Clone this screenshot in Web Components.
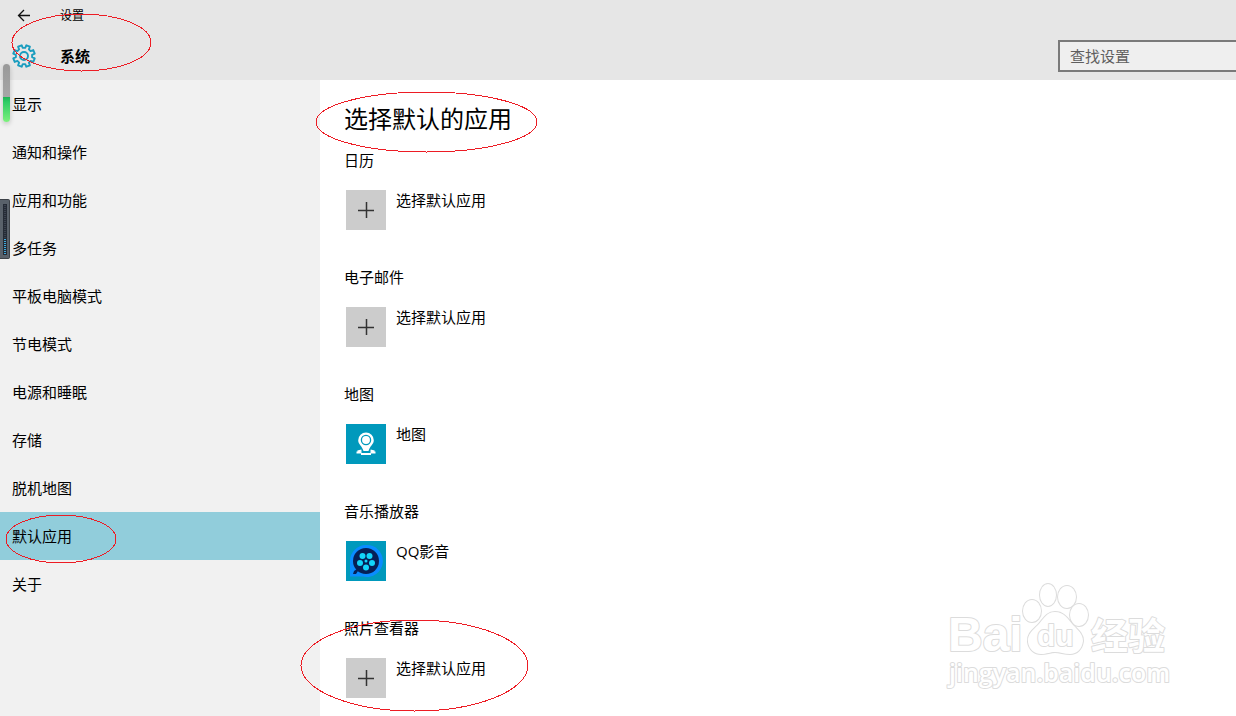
<!DOCTYPE html>
<html lang="zh-CN">
<head>
<meta charset="utf-8">
<title>设置</title>
<style>
    body {
        margin: 0;
        font: 15px/20px "Open Sans", "Noto Sans CJK SC", sans-serif;
        color: #000;
    }
</style>
</head>
<body>
<settings-app></settings-app>

<script>
class BaseHTMLElement extends HTMLElement {
    constructor() {
        super();
        this.attachShadow({ mode: 'open' });
    }

    render() {
        return '';
    }

    connectedCallback() {
        this.shadowRoot.innerHTML = `<style>${this.constructor.styles}</style>${this.render()}`;
    }
}

// Outline of an eight toothed gear around 12,12
function gearPath() {
    let points = [];
    for (let i = 0; i < 8; i++) {
        let middle = 22.5 + i * 45;
        for (let [offset, radius] of [[-14, 8.2], [-10, 11], [10, 11], [14, 8.2]]) {
            let angle = (middle + offset) * Math.PI / 180;
            points.push((12 + radius * Math.cos(angle)).toFixed(2) + ' ' + (12 + radius * Math.sin(angle)).toFixed(2));
        }
    }
    return `M${points.join('L')}Z`;
}

const ICONS = {
    add: `<path d="M12 20.5h16M20.5 12v16" stroke="#333" stroke-width="1.5" fill="none"/>`,
    map: `
        <path d="M20 8.500a7.800 7.800 0 0 0-7.800 7.800c0 4 3.800 5.500 5.300 10.700h5c1.500-5.200 5.300-6.700 5.300-10.700A7.800 7.800 0 0 0 20 8.500Z" fill="#fff"/>
        <circle cx="20" cy="16" r="4.600" fill="#fff" stroke="#0099bc" stroke-width="1.300"/>
        <path d="M15.500 26.500l-4 .8M24.500 26.500l4 .8M10.500 28.500h5M24.500 28.500h5M15 30h10" stroke="#fff" stroke-width="1.800" fill="none"/>`,
    player: `
        <path d="M20 4a16 16 0 1 1-3 31.500H4V20A16 16 0 0 1 20 4Z" fill="#0a8cff"/>
        <circle cx="20" cy="20" r="13" fill="#062056"/>
        <path d="M7 33l1-3 3-2 1 2-2 3Z" fill="#062056"/>
        <g fill="#12d5fa">
            <circle cx="16.500" cy="15" r="3"/><circle cx="23.500" cy="15" r="3"/>
            <circle cx="14" cy="22" r="3"/><circle cx="26" cy="22" r="3"/>
            <circle cx="20" cy="26.500" r="3"/><circle cx="20" cy="20" r="1.500"/>
        </g>`
};

class SettingsHeader extends BaseHTMLElement {
    static get styles() {
        return `
        :host {
            display: flex;
            justify-content: space-between;
            align-items: flex-end;
            height: 80px;
            background: #e6e6e6;
        }

        .row {
            display: flex;
            align-items: center;
            gap: 24px;
            height: 32px;
            padding-left: 12px;
            font-size: 12px;
        }

        .row.main {
            height: 48px;
        }

        button {
            display: flex;
            width: 24px;
            padding: 0;
            border: 0;
            background: none;
        }

        h1 {
            margin: 0;
            font-size: 15px;
            line-height: 20px;
        }

        input {
            box-sizing: border-box;
            width: 178px;
            height: 32px;
            margin-bottom: 8px;
            padding: 0 10px;
            border: 2px solid #7a7a7a;
            border-right: 0;
            border-radius: 0;
            background: #efefef;
            font: inherit;
            outline: none;
        }

        input::placeholder {
            color: #5f5f5f;
            opacity: 1;
        }
        `;
    }

    render() {
        return `
        <div>
            <div class="row">
                <button aria-label="返回">
                    <svg width="24" height="16" viewBox="0 0 24 16" fill="none" stroke="#111" stroke-width="1.3"><path d="M18 7.500H7M12 2L6.500 7.500l5.500 5.500"/></svg>
                </button>
                <span>设置</span>
            </div>
            <div class="row main">
                <svg width="24" height="24" viewBox="0 0 24 24" fill="none" stroke="#1a9dbf" stroke-width="1.900" stroke-linejoin="round"><path d="${gearPath()}"/><circle cx="12" cy="12" r="4"/></svg>
                <h1>系统</h1>
            </div>
        </div>
        <input type="text" placeholder="查找设置" aria-label="查找设置">
        `;
    }
}

class NavItem extends BaseHTMLElement {
    static get styles() {
        return `
        :host {
            display: block;
        }

        :host([active]) {
            background: #91cddb;
        }

        a {
            display: block;
            padding: 14px 12px;
            color: inherit;
            text-decoration: none;
        }
        `;
    }

    render() {
        return `<a href="#"><slot></slot></a>`;
    }
}

class AppChoice extends BaseHTMLElement {
    static get styles() {
        return `
        :host {
            display: block;
            margin-bottom: 37px;
        }

        h3 {
            margin: 0 0 20px;
            font-size: 15px;
            line-height: 20px;
            font-weight: normal;
        }

        button {
            display: flex;
            align-items: flex-start;
            gap: 10px;
            padding: 0 2px;
            border: 0;
            background: none;
            color: inherit;
            font: inherit;
        }

        svg {
            background: #0099bc;
        }

        svg.add {
            background: #ccc;
        }
        `;
    }

    render() {
        let icon = this.getAttribute('icon');
        return `
        <h3>${this.getAttribute('label')}</h3>
        <button>
            <svg class="${icon}" width="40" height="40" viewBox="0 0 40 40">${ICONS[icon]}</svg>
            <span><slot></slot></span>
        </button>
        `;
    }
}

// Hand drawn style marker, placed over whatever it points out
class MarkRing extends BaseHTMLElement {
    static get styles() {
        return `
        :host {
            position: absolute;
            pointer-events: none;
        }

        svg {
            display: block;
            width: 100%;
            height: 100%;
            overflow: visible;
        }
        `;
    }

    render() {
        return `<svg><ellipse cx="50%" cy="50%" rx="50%" ry="50%" fill="none" stroke="#ed1c24" shape-rendering="crispEdges"/></svg>`;
    }
}

class SiteWatermark extends BaseHTMLElement {
    static get styles() {
        return `
        :host {
            position: absolute;
            pointer-events: none;
        }

        svg {
            display: block;
            fill: #fff;
            stroke: #dcdcdc;
            stroke-width: 2px;
            stroke-linejoin: round;
            paint-order: stroke;
        }

        text {
            font-family: "Liberation Sans", "Noto Sans CJK SC", sans-serif;
            font-weight: bold;
        }

        .url {
            font-family: "Open Sans", sans-serif;
            font-weight: 600;
        }
        `;
    }

    render() {
        return `
        <svg width="230" height="116" viewBox="0 0 230 116">
            <text x="4" y="71" font-size="48">Bai</text>
            <ellipse cx="88" cy="31" rx="9" ry="11"/>
            <ellipse cx="104" cy="15" rx="8" ry="11"/>
            <ellipse cx="123" cy="17" rx="9" ry="11"/>
            <ellipse cx="135" cy="35" rx="9" ry="11"/>
            <path d="M111 32c-9 0-12 8-17 13-5 5-11 9-10 17 1 8 7 12 13 12 6 0 9-2 14-2s9 2 15 2c7 0 12-5 13-13 0-7-5-11-10-16-5-6-9-13-18-13Z"/>
            <text x="93" y="66" font-size="30">du</text>
            <text x="147" y="70" font-size="37">经验</text>
            <text class="url" x="5" y="102" font-size="25">jingyan.baidu.com</text>
        </svg>
        `;
    }
}

class SettingsApp extends BaseHTMLElement {
    static get styles() {
        return `
        :host {
            display: flex;
            flex-direction: column;
            position: relative;
            height: 100vh;
            overflow: hidden;
            background: #fff;
        }

        .body {
            display: flex;
            flex: 1;
            min-height: 0;
        }

        nav {
            flex: 0 0 320px;
            background: #f1f1f1;
        }

        main {
            flex: 1;
            padding: 23px 24px 0;
        }

        h2 {
            margin: 0 0 15px;
            font-size: 24px;
            line-height: 32px;
            font-weight: normal;
        }

        /* Desktop gadgets docked to the left edge */
        .meter, .dock {
            position: absolute;
            box-sizing: border-box;
        }

        .meter {
            left: 3px;
            top: 64px;
            width: 7px;
            height: 58px;
            border-radius: 4px;
            background: linear-gradient(#999 0, #a6a6a6 33px, #1eb455 33px, #2fcc66 38px, #7df17d 100%);
            box-shadow: 0 2px 5px #0003;
        }

        .dock {
            left: 0;
            top: 199px;
            width: 10px;
            height: 60px;
            border: 1px solid #3d4248;
            border-left: 0;
            border-radius: 0 2px 2px 0;
            background: #59616a;
        }

        .dock svg {
            display: block;
        }

        .header { left: 12px; top: 14px; width: 139px; height: 57px; }
        .title { left: 316px; top: 92px; width: 221px; height: 60px; }
        .current { left: 6px; top: 515px; width: 110px; height: 48px; }
        .photos { left: 301px; top: 620px; width: 227px; height: 91px; }

        site-watermark {
            right: 62px;
            bottom: 20px;
        }
        `;
    }

    render() {
        return `
        <settings-header></settings-header>
        <div class="body">
            <nav>
                <nav-item>显示</nav-item>
                <nav-item>通知和操作</nav-item>
                <nav-item>应用和功能</nav-item>
                <nav-item>多任务</nav-item>
                <nav-item>平板电脑模式</nav-item>
                <nav-item>节电模式</nav-item>
                <nav-item>电源和睡眠</nav-item>
                <nav-item>存储</nav-item>
                <nav-item>脱机地图</nav-item>
                <nav-item active>默认应用</nav-item>
                <nav-item>关于</nav-item>
            </nav>
            <main>
                <h2>选择默认的应用</h2>
                <app-choice label="日历" icon="add">选择默认应用</app-choice>
                <app-choice label="电子邮件" icon="add">选择默认应用</app-choice>
                <app-choice label="地图" icon="map">地图</app-choice>
                <app-choice label="音乐播放器" icon="player">QQ影音</app-choice>
                <app-choice label="照片查看器" icon="add">选择默认应用</app-choice>
            </main>
        </div>
        <div class="meter"></div>
        <div class="dock">
            <svg width="9" height="58"><path d="M3 4h4v51H3Z" fill="#252b35"/><path d="M5 5v34" stroke="#3c4350" stroke-width="2" stroke-dasharray="1 1"/><path d="M5 39v15" stroke="#3fa9dc" stroke-width="2" stroke-dasharray="1 1"/></svg>
        </div>
        <mark-ring class="header"></mark-ring>
        <mark-ring class="title"></mark-ring>
        <mark-ring class="current"></mark-ring>
        <mark-ring class="photos"></mark-ring>
        <site-watermark></site-watermark>
        `;
    }
}

customElements.define('settings-header', SettingsHeader);
customElements.define('nav-item', NavItem);
customElements.define('app-choice', AppChoice);
customElements.define('mark-ring', MarkRing);
customElements.define('site-watermark', SiteWatermark);
customElements.define('settings-app', SettingsApp);
</script>
</body>
</html>
